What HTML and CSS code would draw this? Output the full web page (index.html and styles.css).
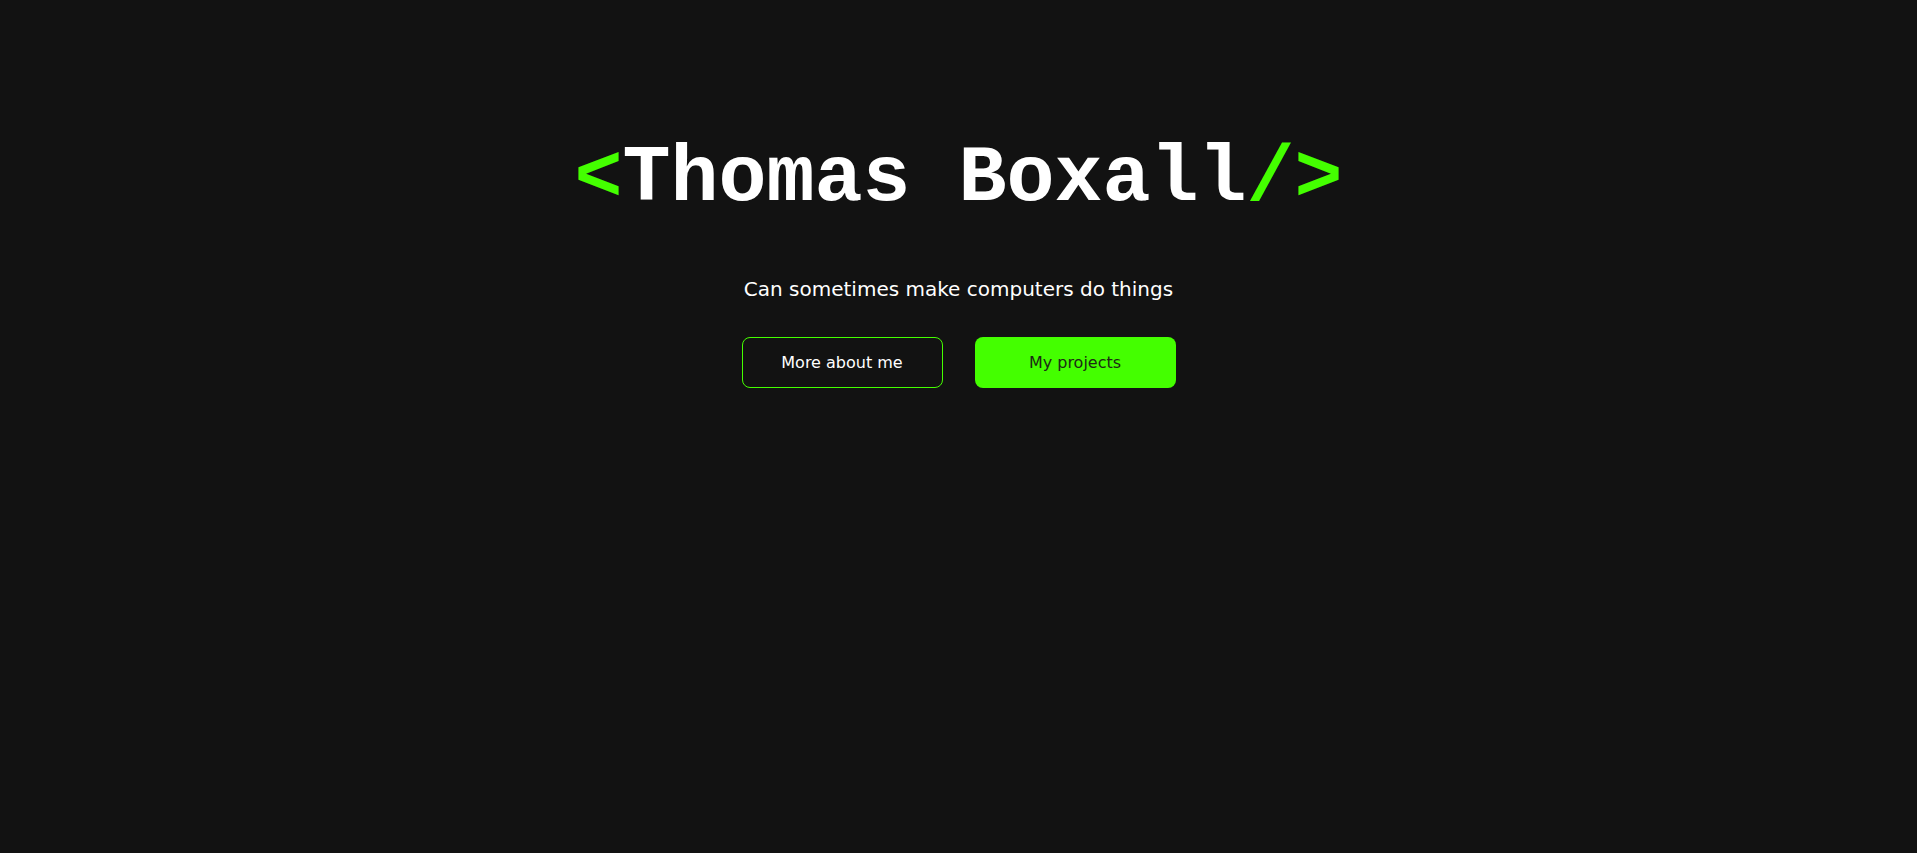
FILE: index.html
```html
<!DOCTYPE html>
<html lang="en">
<head>
<meta charset="utf-8">
<title>Thomas Boxall</title>
<link rel="stylesheet" href="styles.css">
</head>
<body>
<main class="hero">
  <h1 class="title"><span class="accent">&lt;</span>Thomas Boxall<span class="accent">/&gt;</span></h1>
  <p class="tagline">Can sometimes make computers do things</p>
  <div class="actions">
    <a class="btn btn-outline" href="#">More about me</a>
    <a class="btn btn-solid" href="#">My projects</a>
  </div>
</main>
</body>
</html>
```
FILE: styles.css
```css
html, body {
  margin: 0;
  padding: 0;
  background: #121212;
}
body {
  min-height: 100vh;
  font-family: "DejaVu Sans", "Open Sans", sans-serif;
  color: #ffffff;
}
.hero {
  display: flex;
  flex-direction: column;
  align-items: center;
  padding-top: 139px;
}
.title {
  margin: 0;
  font-family: "Courier New", "Nimbus Mono PS", "FreeMono", Courier, "Liberation Mono", monospace;
  font-weight: 700;
  font-size: 80px;
  line-height: 80px;
  color: #ffffff;
  white-space: pre;
}
.accent {
  color: #44ff00;
}
.tagline {
  margin: 56px 0 0;
  font-size: 20px;
  line-height: 28px;
  color: #ffffff;
}
.actions {
  display: flex;
  gap: 32px;
  margin-top: 34px;
}
.btn {
  box-sizing: border-box;
  width: 201px;
  height: 51px;
  display: flex;
  align-items: center;
  justify-content: center;
  border-radius: 8px;
  font-size: 16px;
  text-decoration: none;
}
.btn-outline {
  border: 1px solid #44ff00;
  color: #ffffff;
}
.btn-solid {
  background: #44ff00;
  color: #1c2a14;
}
```
